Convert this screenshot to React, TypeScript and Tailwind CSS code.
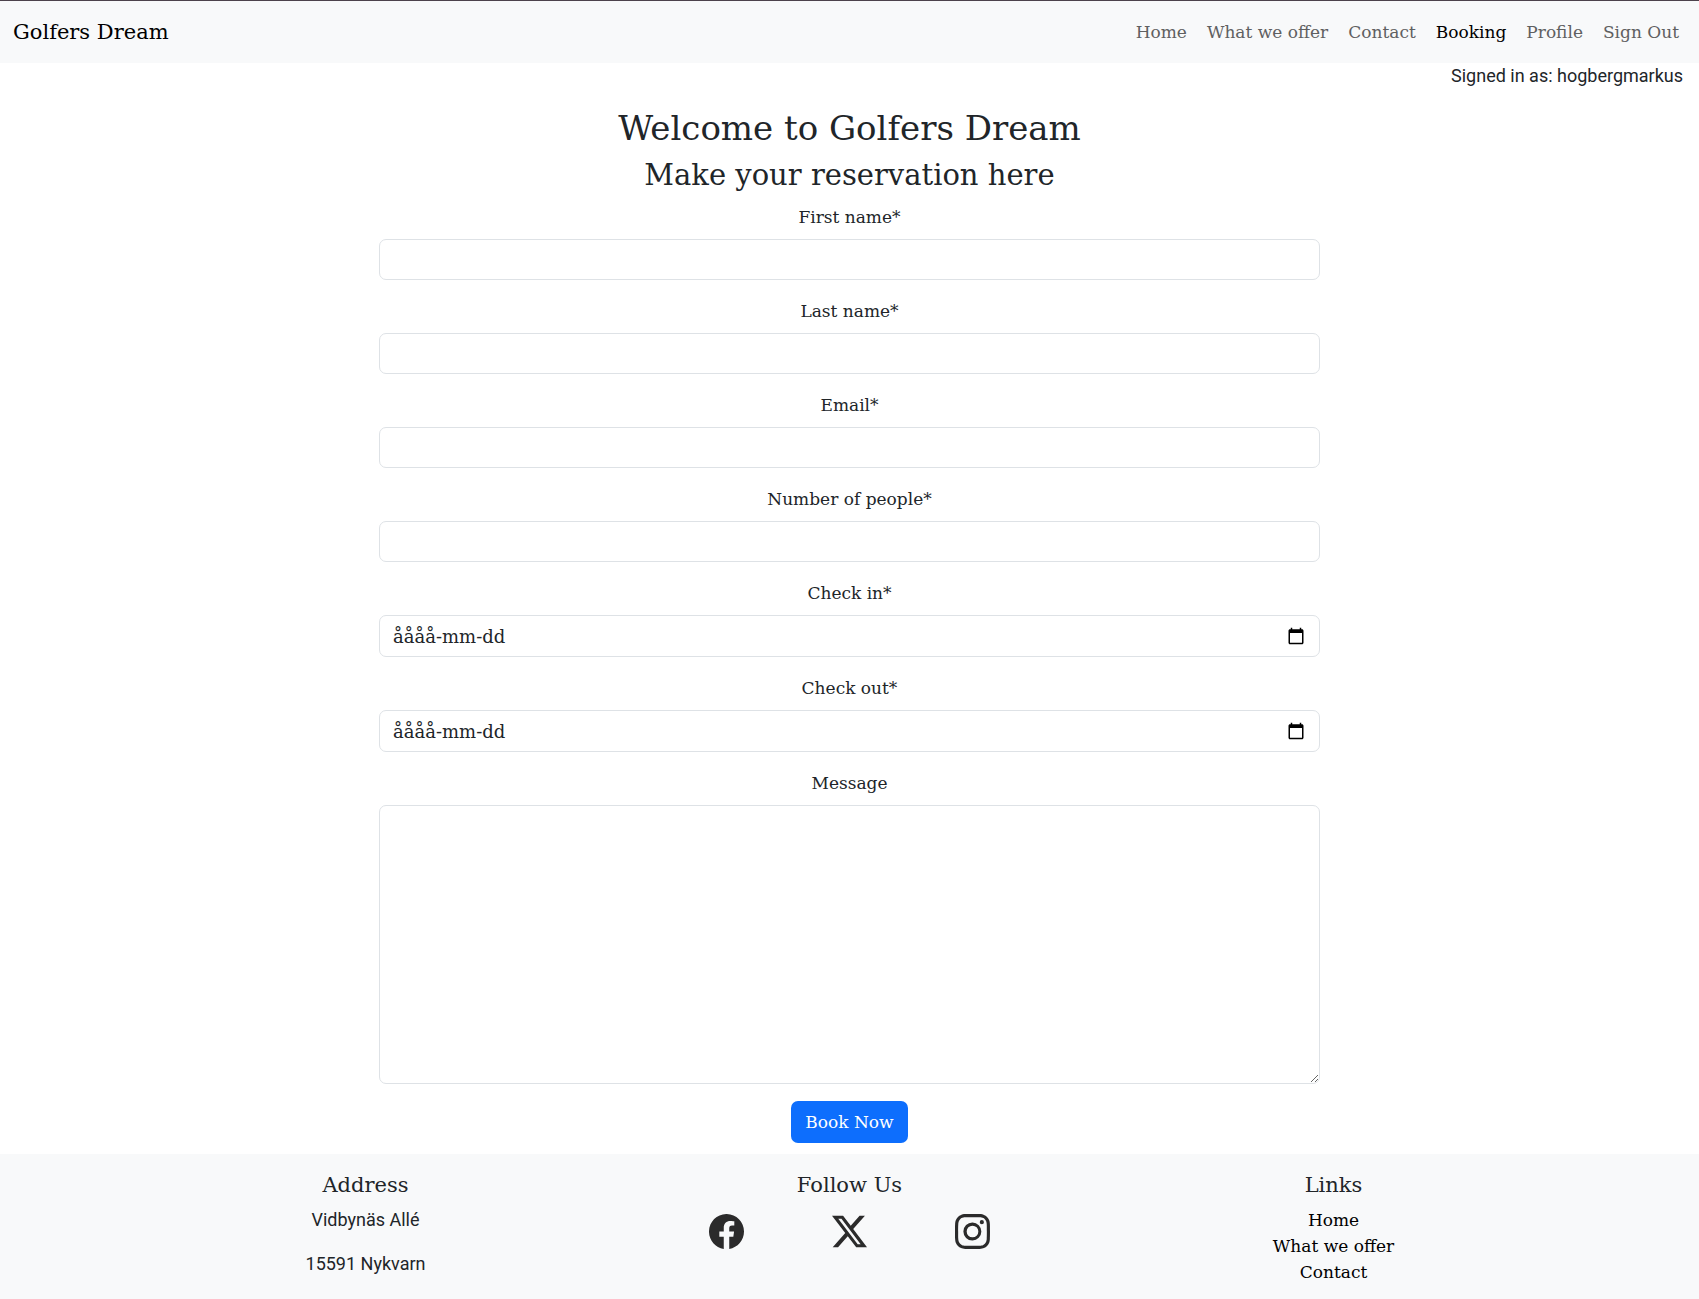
import { BsFacebook, BsInstagram, BsTwitterX } from "react-icons/bs";

const navLinks = ["Home", "What we offer", "Contact", "Booking", "Profile", "Sign Out"];

const textFields = [
  { id: "first-name", label: "First name*", type: "text" },
  { id: "last-name", label: "Last name*", type: "text" },
  { id: "email", label: "Email*", type: "email" },
  { id: "people", label: "Number of people*", type: "number" },
];

const dateFields = [
  { id: "check-in", label: "Check in*" },
  { id: "check-out", label: "Check out*" },
];

const socials = [
  { name: "Facebook", Icon: BsFacebook },
  { name: "X", Icon: BsTwitterX },
  { name: "Instagram", Icon: BsInstagram },
];

const fieldClass =
  "block w-full rounded-[7px] border border-[#dee2e6] bg-white px-[13px] text-[#212529] placeholder:text-[#212529] placeholder:opacity-100";

function CalendarIcon() {
  return (
    <svg viewBox="0 0 24 24" className="size-[18px]" fill="#000" aria-hidden="true">
      <path d="M20 3h-1V1h-2v2H7V1H5v2H4c-1.1 0-2 .9-2 2v16c0 1.1.9 2 2 2h16c1.1 0 2-.9 2-2V5c0-1.1-.9-2-2-2zm0 18H4V8h16v13z" />
    </svg>
  );
}

function Navbar() {
  return (
    <nav className="flex h-[63px] items-center justify-between border-t border-[#4c424c] bg-[#f8f9fa] pr-5 pl-[13px]">
      <a href="#" className="text-[21px] leading-8 text-black">
        Golfers Dream
      </a>
      <ul className="flex gap-5">
        {navLinks.map((name) => (
          <li key={name}>
            <a href="#" className={name === "Booking" ? "text-black" : "text-[#5f6061]"}>
              {name}
            </a>
          </li>
        ))}
      </ul>
    </nav>
  );
}

function BookingForm() {
  return (
    <form className="mx-auto w-full max-w-[941px] text-center">
      {textFields.map(({ id, label, type }) => (
        <div key={id} className="mb-[18px]">
          <label htmlFor={id} className="mb-[9px] block">
            {label}
          </label>
          <input id={id} type={type} className={`${fieldClass} h-[41px]`} />
        </div>
      ))}
      {dateFields.map(({ id, label }) => (
        <div key={id} className="mb-[18px]">
          <label htmlFor={id} className="mb-[9px] block">
            {label}
          </label>
          <div className="relative">
            <input
              id={id}
              type="text"
              placeholder="åååå-mm-dd"
              className={`${fieldClass} h-[42px] text-lg`}
            />
            <button
              type="button"
              aria-label="Open calendar"
              className="absolute inset-y-0 right-[15px] flex items-center"
            >
              <CalendarIcon />
            </button>
          </div>
        </div>
      ))}
      <label htmlFor="message" className="mb-[9px] block">
        Message
      </label>
      <textarea
        id="message"
        className="mb-[17px] block h-[279px] w-full rounded-[7px] border border-[#dee2e6] bg-white px-[13px] py-[7px]"
      />
      <button type="submit" className="h-[42px] rounded-[7px] bg-[#0d6efd] px-[14px] text-white">
        Book Now
      </button>
    </form>
  );
}

function Footer() {
  return (
    <footer className="mt-[11px] grow bg-[#f8f9fa] pt-[18px]">
      <div className="mx-auto grid max-w-[1452px] grid-cols-3 text-center">
        <section>
          <h5 className="mb-[9px] text-[21px] leading-[26px]">Address</h5>
          <address className="flex flex-col gap-[18px] font-[Roboto,sans-serif] text-lg leading-[26px] not-italic">
            <p>Vidbynäs Allé</p>
            <p>15591 Nykvarn</p>
          </address>
        </section>
        <section>
          <h5 className="mb-4 text-[21px] leading-[26px]">Follow Us</h5>
          <ul className="flex justify-center gap-[88px] text-[35px] text-[#2b2b2b]">
            {socials.map(({ name, Icon }) => (
              <li key={name}>
                <a href="#" aria-label={name} className="block">
                  <Icon />
                </a>
              </li>
            ))}
          </ul>
        </section>
        <section>
          <h5 className="mb-[9px] text-[21px] leading-[26px]">Links</h5>
          <ul className="text-black">
            {["Home", "What we offer", "Contact"].map((name) => (
              <li key={name}>
                <a href="#">{name}</a>
              </li>
            ))}
          </ul>
        </section>
      </div>
    </footer>
  );
}

export default function App() {
  return (
    <div className="flex min-h-screen flex-col bg-white font-['DejaVu_Serif',serif] text-[17px] leading-[26px] text-[#212529]">
      <Navbar />
      <p className="pr-4 text-right font-[Roboto,sans-serif] text-lg leading-[26px]">
        Signed in as: hogbergmarkus
      </p>
      <main>
        <h1 className="mt-[18px] mb-2 text-center text-[34px] leading-[42px]">Welcome to Golfers Dream</h1>
        <h2 className="mb-[10px] text-center text-[29px] leading-[37px]">Make your reservation here</h2>
        <BookingForm />
      </main>
      <Footer />
    </div>
  );
}
